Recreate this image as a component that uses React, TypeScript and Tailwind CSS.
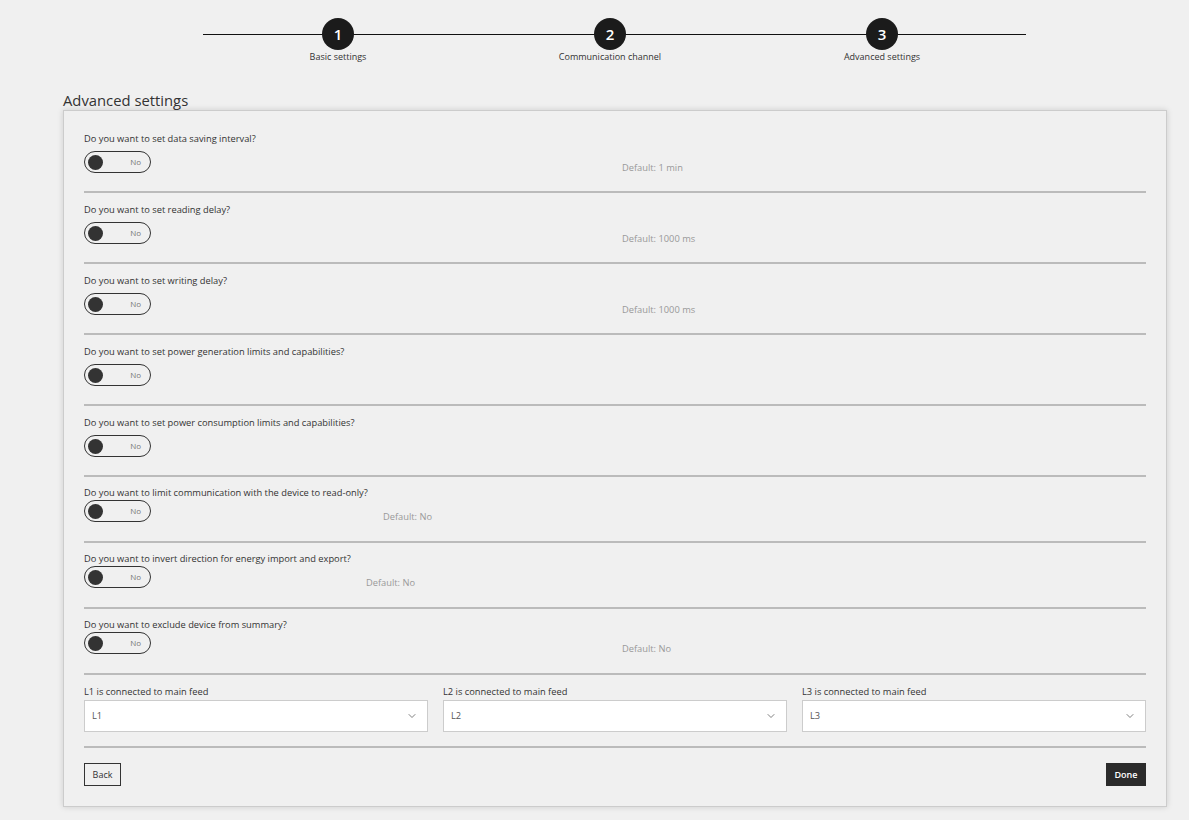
import { ChevronDown } from 'lucide-react'

type Question = {
  text: string
  defaultText?: string
  // offset of the default hint from the toggle's right edge
  hintClass?: string
  compact?: boolean
}

const QUESTIONS: Question[] = [
  { text: 'Do you want to set data saving interval?', defaultText: 'Default: 1 min', hintClass: 'ml-[471px]' },
  { text: 'Do you want to set reading delay?', defaultText: 'Default: 1000 ms', hintClass: 'ml-[471px]' },
  { text: 'Do you want to set writing delay?', defaultText: 'Default: 1000 ms', hintClass: 'ml-[471px]' },
  { text: 'Do you want to set power generation limits and capabilities?' },
  { text: 'Do you want to set power consumption limits and capabilities?' },
  {
    text: 'Do you want to limit communication with the device to read-only?',
    defaultText: 'Default: No',
    hintClass: 'ml-[232px]',
    compact: true,
  },
  {
    text: 'Do you want to invert direction for energy import and export?',
    defaultText: 'Default: No',
    hintClass: 'ml-[215px]',
    compact: true,
  },
  { text: 'Do you want to exclude device from summary?', defaultText: 'Default: No', hintClass: 'ml-[471px]', compact: true },
]

const STEPS = ['Basic settings', 'Communication channel', 'Advanced settings']
const FEEDS = ['L1', 'L2', 'L3']

function Toggle() {
  return (
    <button
      type="button"
      role="switch"
      aria-checked={false}
      className="flex h-[22px] w-[67px] items-center rounded-full border border-[#333] bg-transparent pl-[3px] pr-[9px]"
    >
      <span className="h-[15px] w-[15px] rounded-full bg-[#333]" />
      <span className="ml-auto text-[8px] leading-none text-[#777]">No</span>
    </button>
  )
}

function QuestionRow({ q }: { q: Question }) {
  return (
    <div className={`border-b-2 border-[#bbb] ${q.compact ? 'pt-[10px] pb-[19px]' : 'pt-[11px] pb-[18px]'}`}>
      <p className="text-[9.3px] leading-[12px] text-[#333]">{q.text}</p>
      <div className={`flex items-start ${q.compact ? 'mt-[1px]' : 'mt-[6px]'}`}>
        <Toggle />
        {q.defaultText && (
          <span className={`mt-[12px] text-[9.3px] leading-[10px] text-[#999] ${q.hintClass}`}>{q.defaultText}</span>
        )}
      </div>
    </div>
  )
}

export default function App() {
  return (
    <div className="min-h-[820px] bg-[#f0f0f0] font-['Open_Sans',sans-serif] text-[#333]">
      {/* stepper */}
      <div className="pt-[18px] pl-[202px]">
        <div className="relative grid w-[816px] grid-cols-3">
          <div className="absolute top-[16px] right-[-8px] left-[1px] h-px bg-[#111]" />
          {STEPS.map((label, i) => (
            <div key={label} className="relative flex flex-col items-center">
              <div className="flex h-8 w-8 items-center justify-center rounded-full bg-[#1b1b1b] text-[15px] font-semibold text-white">
                {i + 1}
              </div>
              <span className="mt-px text-[9px] leading-[12px] text-[#333]">{label}</span>
            </div>
          ))}
        </div>
      </div>

      <div className="px-[63px] pt-[27px]">
        <h1 className="text-[14.8px] leading-[20px] text-[#333]">Advanced settings</h1>

        <div className="w-[1104px] border border-[#ccc] bg-[#f0f0f0] px-5 pt-[11px] pb-5 shadow-[0_0_6px_rgba(0,0,0,0.15)]">
          {QUESTIONS.map((q) => (
            <QuestionRow key={q.text} q={q} />
          ))}

          <div className="grid grid-cols-3 gap-[15px] border-b-2 border-[#bbb] pt-[11px] pb-[14px]">
            {FEEDS.map((feed) => (
              <div key={feed}>
                <p className="text-[9.3px] leading-[12px] text-[#333]">{feed} is connected to main feed</p>
                <div className="mt-[2px] flex h-[32px] items-center border border-[#ccc] bg-white pr-[9px] pl-[7px]">
                  <span className="text-[9.3px] text-[#555]">{feed}</span>
                  <ChevronDown className="ml-auto h-3 w-3 text-[#555]" strokeWidth={1.5} />
                </div>
              </div>
            ))}
          </div>

          <div className="flex items-center justify-between pt-[15px]">
            <button type="button" className="h-[23px] w-[37px] border border-[#333] text-[9px] text-[#333]">
              Back
            </button>
            <button type="button" className="h-[23px] w-[40px] bg-[#2b2b2b] text-[9px] font-semibold text-white">
              Done
            </button>
          </div>
        </div>
      </div>
    </div>
  )
}
